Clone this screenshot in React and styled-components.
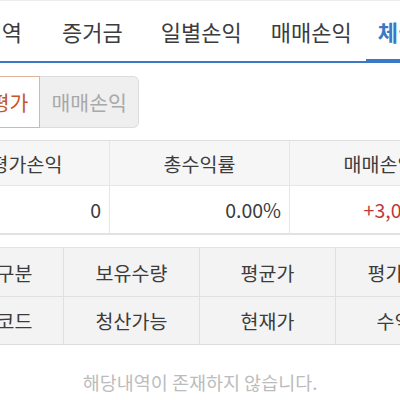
import styled, { createGlobalStyle } from "styled-components";

const GlobalStyle = createGlobalStyle`
  body {
    margin: 0;
    background: #fff;
    font-family: "Noto Sans CJK KR", "Noto Sans", sans-serif;
    color: #3c3c3c;
  }
`;

const Page = styled.div`
  width: 400px;
  height: 400px;
  overflow: hidden;
`;

const TabBar = styled.nav`
  box-sizing: border-box;
  height: 63px;
  border-top: 1px solid #ececec;
  border-bottom: 2px solid #3b78c6;
  overflow: hidden;
`;

const TabList = styled.ul`
  display: flex;
  height: 100%;
  margin: 0 0 0 -71px;
  padding: 0;
  list-style: none;
  white-space: nowrap;
`;

const Tab = styled.li`
  box-sizing: border-box;
  display: flex;
  align-items: center;
  height: calc(100% + 2px);
  margin-bottom: -2px;
  padding: 2px 12px 0;
  font-size: 22px;
  color: ${(p) => (p.$active ? "#3b78c6" : "#3c3c3c")};
  font-weight: ${(p) => (p.$active ? 700 : 400)};
  border-bottom: 4px solid ${(p) => (p.$active ? "#3b78c6" : "transparent")};
`;

const Scroller = styled.div`
  overflow: hidden;
`;

const Content = styled.div`
  margin-left: -70px;
  width: 720px;
`;

const Segment = styled.div`
  display: flex;
  margin: 13px 0 0 11px;
`;

const SegButton = styled.button`
  box-sizing: border-box;
  height: 52px;
  padding: 0 11px;
  font-family: inherit;
  font-size: 20.5px;
  border: 1px solid ${(p) => (p.$on ? "#e2b39b" : "#dcdcdc")};
  border-left-width: ${(p) => (p.$on ? "1px" : "0")};
  background: ${(p) => (p.$on ? "#fff" : "#efefef")};
  color: ${(p) => (p.$on ? "#c4562a" : "#a9a9a9")};
  border-radius: ${(p) => (p.$on ? "0" : "0 6px 6px 0")};
`;

const Summary = styled.div`
  display: grid;
  grid-template-columns: 166px 180px 180px;
  margin: 12px 0 0 14px;
  border-top: 1px solid #dedede;
  border-bottom: 2px solid #e2e2e2;
`;

const Cell = styled.div`
  box-sizing: border-box;
  display: flex;
  align-items: center;
  justify-content: ${(p) => (p.$head ? "center" : "flex-end")};
  height: ${(p) => (p.$head ? "45px" : "47px")};
  padding: 0 8px;
  font-size: 19.5px;
  background: ${(p) => (p.$head ? "#f6f6f6" : "#fff")};
  color: ${(p) => p.$color || "#3c3c3c"};
  border-right: 1px solid #e6e6e6;
  border-bottom: ${(p) => (p.$head ? "1px solid #e6e6e6" : "0")};
`;

const Holdings = styled.div`
  display: grid;
  grid-template-columns: 134px repeat(4, 136px);
  margin-top: 12px;
  background: #f3f3f3;
  border-top: 1px solid #e3e3e3;
  border-bottom: 1px solid #dcdcdc;
`;

const HCell = styled.div`
  box-sizing: border-box;
  display: flex;
  align-items: center;
  justify-content: center;
  height: ${(p) => (p.$top ? "49px" : "47px")};
  font-size: 19.5px;
  color: #3c3c3c;
  border-right: 1px solid #e0e0e0;
  border-bottom: ${(p) => (p.$top ? "1px solid #e0e0e0" : "0")};
`;

const Empty = styled.p`
  margin: 25px 0 0;
  line-height: 24px;
  text-align: center;
  font-size: 18.5px;
  color: #bcbcbc;
`;

const tabs = [
  { label: "주문내역", ml: 0 },
  { label: "증거금", ml: 16 },
  { label: "일별손익", ml: 14 },
  { label: "매매손익", ml: 5 },
  { label: "체결내역", ml: 2, active: true },
];

const summaryHead = ["평가손익", "총수익률", "매매손익"];
const summaryVals = [
  { v: "0" },
  { v: "0.00%" },
  { v: "+3,000,000", color: "#c0393b" },
];

const holdTop = ["매매구분", "보유수량", "평균가", "평가손익", "비중"];
const holdBottom = ["종목코드", "청산가능", "현재가", "수익률", "수량"];

export default function App() {
  return (
    <Page>
      <GlobalStyle />
      <TabBar>
        <TabList>
          {tabs.map((t) => (
            <Tab key={t.label} $active={t.active} style={{ marginLeft: t.ml }}>
              {t.label}
            </Tab>
          ))}
        </TabList>
      </TabBar>
      <Scroller>
        <Content>
          <Segment>
            <SegButton $on>잔고평가</SegButton>
            <SegButton>매매손익</SegButton>
          </Segment>
          <Summary>
            {summaryHead.map((h) => (
              <Cell key={h} $head>
                {h}
              </Cell>
            ))}
            {summaryVals.map((s) => (
              <Cell key={s.v} $color={s.color}>
                {s.v}
              </Cell>
            ))}
          </Summary>
          <Holdings>
            {holdTop.map((h) => (
              <HCell key={h} $top>
                {h}
              </HCell>
            ))}
            {holdBottom.map((h) => (
              <HCell key={h}>{h}</HCell>
            ))}
          </Holdings>
        </Content>
      </Scroller>
      <Empty>해당내역이 존재하지 않습니다.</Empty>
    </Page>
  );
}
